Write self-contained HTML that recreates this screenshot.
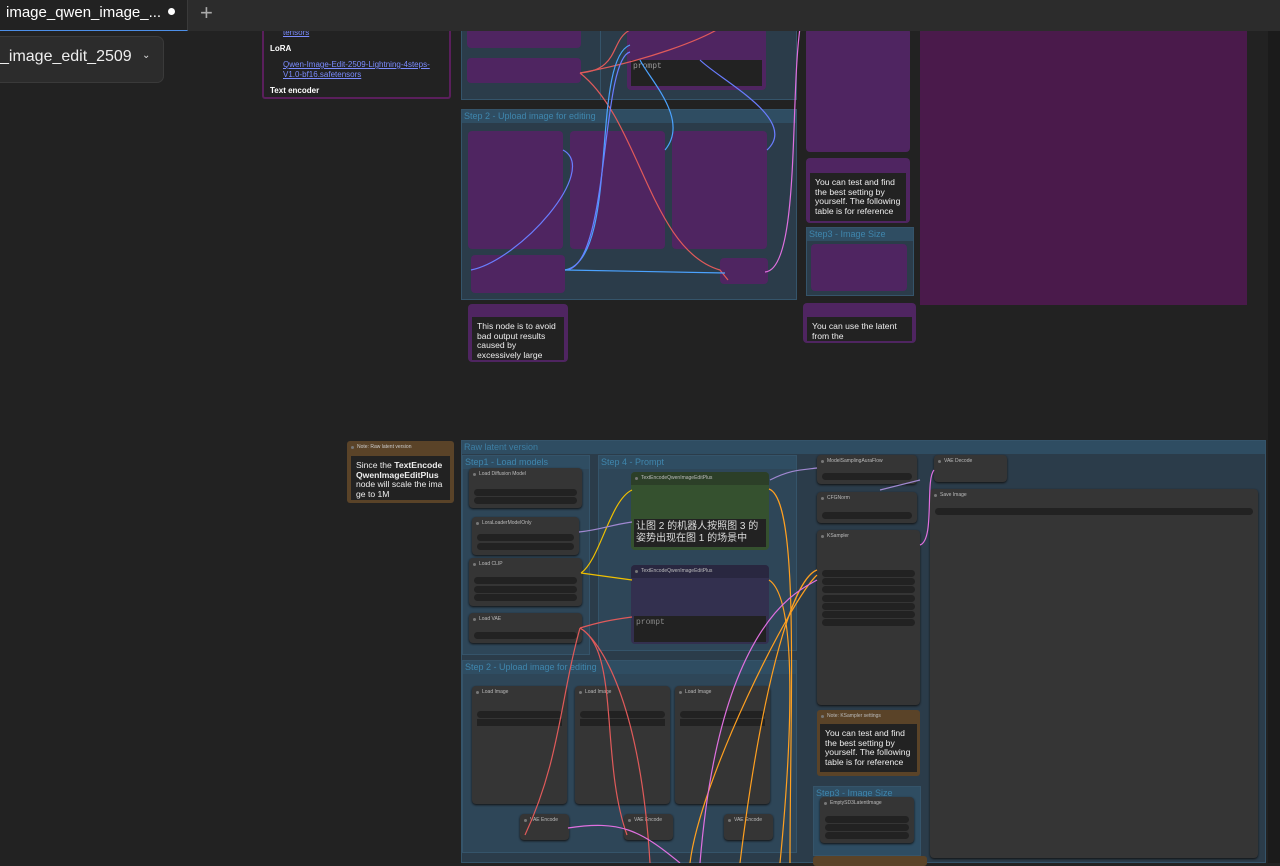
<!DOCTYPE html>
<html><head><meta charset="utf-8"><style>
*{box-sizing:border-box;margin:0;padding:0}
body{width:1280px;height:863px;background:#222;position:relative;overflow:hidden;font-family:"Liberation Sans","Noto Sans CJK SC",sans-serif}
.a{position:absolute}
.grp{position:absolute;background:#2b3c4a;border:1px solid #35546a}
.gh{position:absolute;left:0;right:0;top:0;height:13px;background:#2f4d62;color:#3f86ad;font-size:9px;padding-left:2px;line-height:13px}
.pn{position:absolute;background:#4f2561;border-radius:4px}
.n{position:absolute;background:#353535;border-radius:4px;box-shadow:0 1px 2px #111}
.nt{height:13px;font-size:5px;color:#bbb;line-height:13px;padding-left:10px;position:relative}
.nt:before{content:"";position:absolute;left:4px;top:5px;width:3px;height:3px;border-radius:50%;background:#777}
.w{position:absolute;height:7px;background:#222;border-radius:4px;left:5px;right:5px}
.tb{position:absolute;background:#222;color:#eee;font-size:8.6px;line-height:9.6px;padding:5px 5px;overflow:hidden;word-break:break-word}
</style></head><body>

<div class="a" style="left:262px;top:28px;width:189px;height:71px;background:#222;border:2px solid #5a1f5c;border-top:none;border-radius:0 0 3px 3px"></div>
<div class="a" style="left:270px;top:28px;font-size:8px;color:#fff;line-height:10px">
<div style="color:#7b8cff;text-decoration:underline;margin-left:13px">tensors</div>
<div style="font-weight:bold;margin-top:6px">LoRA</div>
<div style="margin:6px 0 0 13px;color:#7b8cff;text-decoration:underline;width:160px">Qwen-Image-Edit-2509-Lightning-4steps-V1.0-bf16.safetensors</div>
<div style="font-weight:bold;margin-top:6px">Text encoder</div></div>

<div class="grp" style="left:461px;top:28px;width:142px;height:72px;border-top:none"></div>
<div class="pn" style="left:467px;top:28px;width:114px;height:20px"></div>
<div class="pn" style="left:467px;top:58px;width:114px;height:25px"></div>
<div class="grp" style="left:600px;top:28px;width:197px;height:72px;border-top:none"></div>
<div class="pn" style="left:627px;top:28px;width:139px;height:62px"></div>
<div class="a" style="left:631px;top:60px;width:131px;height:26px;background:#222;color:#999;font-family:'Liberation Mono',monospace;font-size:8px;padding:2px">prompt</div>

<div class="grp" style="left:461px;top:109px;width:336px;height:191px"><div class="gh">Step 2 - Upload image for editing</div></div>
<div class="pn" style="left:468px;top:131px;width:95px;height:118px"></div>
<div class="pn" style="left:570px;top:131px;width:95px;height:118px"></div>
<div class="pn" style="left:672px;top:131px;width:95px;height:118px"></div>
<div class="pn" style="left:471px;top:255px;width:94px;height:38px"></div>
<div class="pn" style="left:720px;top:258px;width:48px;height:26px"></div>
<div class="pn" style="left:468px;top:304px;width:100px;height:58px"></div>
<div class="tb" style="left:472px;top:317px;width:92px;height:43px">This node is to avoid bad output results caused by excessively large</div>

<div class="pn" style="left:806px;top:28px;width:104px;height:124px"></div>
<div class="pn" style="left:806px;top:158px;width:104px;height:65px"></div>
<div class="tb" style="left:810px;top:173px;width:96px;height:48px">You can test and find the best setting by yourself. The following table is for reference</div>
<div class="grp" style="left:806px;top:227px;width:108px;height:69px"><div class="gh">Step3 - Image Size</div></div>
<div class="pn" style="left:811px;top:244px;width:96px;height:47px"></div>
<div class="pn" style="left:803px;top:303px;width:113px;height:40px"></div>
<div class="tb" style="left:807px;top:317px;width:105px;height:24px">You can use the latent from the</div>
<div class="a" style="left:920px;top:28px;width:327px;height:277px;background:#4a1a4b"></div>
<div class="a" style="left:1268px;top:28px;width:12px;height:835px;background:#1b1b1b"></div>

<div class="a" style="left:347px;top:441px;width:107px;height:62px;background:#5a4328;border-radius:3px"><div class="nt" style="color:#ccc">Note: Raw latent version</div></div>
<div class="tb" style="left:351px;top:456px;width:99px;height:44px;font-size:8.6px;word-break:break-all">Since the <b>TextEncodeQwenImageEditPlus</b> node will scale the image to 1M</div>

<div class="grp" style="left:461px;top:440px;width:805px;height:423px"><div class="gh" style="color:#3d7ea3">Raw latent version</div></div>
<div class="grp" style="left:462px;top:455px;width:128px;height:200px;background:#2e4658"><div class="gh">Step1 - Load models</div></div>
<div class="grp" style="left:598px;top:455px;width:199px;height:196px;background:#2e4658"><div class="gh">Step 4 - Prompt</div></div>
<div class="grp" style="left:462px;top:660px;width:335px;height:193px;background:#2e4658"><div class="gh">Step 2 - Upload image for editing</div></div>

<div class="n" style="left:469px;top:468px;width:113px;height:40px"><div class="nt">Load Diffusion Model</div><div class="w" style="top:21px"></div><div class="w" style="top:29px"></div></div>
<div class="n" style="left:472px;top:517px;width:107px;height:38px"><div class="nt">LoraLoaderModelOnly</div><div class="w" style="top:17px"></div><div class="w" style="top:26px"></div></div>
<div class="n" style="left:469px;top:558px;width:113px;height:48px"><div class="nt">Load CLIP</div><div class="w" style="top:19px"></div><div class="w" style="top:28px"></div><div class="w" style="top:36px"></div></div>
<div class="n" style="left:469px;top:613px;width:113px;height:30px"><div class="nt">Load VAE</div><div class="w" style="top:19px"></div></div>

<div class="a" style="left:631px;top:472px;width:138px;height:78px;background:#35512f;border-radius:4px"><div class="nt" style="background:#2c3f28;border-radius:4px 4px 0 0">TextEncodeQwenImageEditPlus</div></div>
<div class="a" style="left:634px;top:519px;width:132px;height:28px;background:#222;color:#ddd;font-size:10px;line-height:12px;padding:2px">让图 2 的机器人按照图 3 的姿势出现在图 1 的场景中</div>
<div class="a" style="left:631px;top:565px;width:138px;height:79px;background:#33304f;border-radius:4px"><div class="nt" style="background:#292740;border-radius:4px 4px 0 0">TextEncodeQwenImageEditPlus</div></div>
<div class="a" style="left:634px;top:616px;width:132px;height:26px;background:#222;color:#888;font-family:'Liberation Mono',monospace;font-size:8px;padding:2px">prompt</div>

<div class="n" style="left:472px;top:686px;width:95px;height:118px"><div class="nt">Load Image</div><div class="w" style="top:25px"></div><div class="w" style="top:33px;border-radius:0"></div></div>
<div class="n" style="left:575px;top:686px;width:95px;height:118px"><div class="nt">Load Image</div><div class="w" style="top:25px"></div><div class="w" style="top:33px;border-radius:0"></div></div>
<div class="n" style="left:675px;top:686px;width:95px;height:118px"><div class="nt">Load Image</div><div class="w" style="top:25px"></div><div class="w" style="top:33px;border-radius:0"></div></div>
<div class="n" style="left:520px;top:814px;width:49px;height:26px"><div class="nt">VAE Encode</div></div>
<div class="n" style="left:624px;top:814px;width:49px;height:26px"><div class="nt">VAE Encode</div></div>
<div class="n" style="left:724px;top:814px;width:49px;height:26px"><div class="nt">VAE Encode</div></div>

<div class="n" style="left:817px;top:455px;width:100px;height:29px"><div class="nt">ModelSamplingAuraFlow</div><div class="w" style="top:18px"></div></div>
<div class="n" style="left:817px;top:492px;width:100px;height:31px"><div class="nt">CFGNorm</div><div class="w" style="top:20px"></div></div>
<div class="n" style="left:817px;top:530px;width:103px;height:175px"><div class="nt">KSampler</div>
<div class="w" style="top:40px"></div><div class="w" style="top:48px"></div><div class="w" style="top:56px"></div><div class="w" style="top:65px"></div><div class="w" style="top:73px"></div><div class="w" style="top:81px"></div><div class="w" style="top:89px"></div></div>
<div class="n" style="left:934px;top:455px;width:73px;height:27px"><div class="nt">VAE Decode</div></div>
<div class="n" style="left:930px;top:489px;width:328px;height:369px"><div class="nt">Save Image</div><div class="w" style="top:19px"></div></div>
<div class="a" style="left:817px;top:710px;width:103px;height:66px;background:#5a4328;border-radius:3px"><div class="nt">Note: KSampler settings</div></div>
<div class="tb" style="left:820px;top:724px;width:97px;height:48px">You can test and find the best setting by yourself. The following table is for reference</div>
<div class="grp" style="left:813px;top:786px;width:108px;height:70px;background:#2e4d63"><div class="gh">Step3 - Image Size</div></div>
<div class="n" style="left:820px;top:797px;width:94px;height:46px"><div class="nt">EmptySD3LatentImage</div><div class="w" style="top:19px"></div><div class="w" style="top:27px"></div><div class="w" style="top:35px"></div></div>
<div class="a" style="left:813px;top:856px;width:114px;height:10px;background:#5a4328;border-radius:3px"></div>

<svg class="a" style="left:0;top:0" width="1280" height="863" fill="none" stroke-width="1.2">
<path d="M580 73 C620 70 610 40 630 30" stroke="#e05a5a"/>
<path d="M580 73 C650 60 700 40 720 28" stroke="#e05a5a"/>
<path d="M580 73 C640 120 650 250 720 270 L728 280" stroke="#e05a5a"/>
<path d="M563 150 C600 170 520 260 471 270" stroke="#6a7dff"/>
<path d="M565 270 C620 260 590 60 630 45" stroke="#4ba3ff"/>
<path d="M565 270 C610 270 600 60 630 52" stroke="#6a7dff"/>
<path d="M565 270 L725 273" stroke="#4ba3ff"/>
<path d="M665 150 C690 120 650 80 640 60" stroke="#4ba3ff"/>
<path d="M767 150 C800 120 720 80 700 60" stroke="#6a7dff"/>
<path d="M765 272 C800 270 790 100 800 28" stroke="#e070e0"/>
<path d="M581 573 C600 560 610 500 632 490" stroke="#f0c000"/>
<path d="M581 573 L632 580" stroke="#f0c000"/>
<path d="M579 532 C600 530 610 525 632 522" stroke="#a088d0"/>
<path d="M580 628 C600 622 610 620 632 617" stroke="#e05a5a"/>
<path d="M580 628 C600 640 640 700 650 863" stroke="#e05a5a"/>
<path d="M580 628 C560 700 560 760 525 835" stroke="#e05a5a"/>
<path d="M580 628 C620 650 600 760 627 835" stroke="#e05a5a"/>
<path d="M769 489 C800 500 790 700 790 863" stroke="#ffa020"/>
<path d="M769 580 C800 600 790 760 780 863" stroke="#ffa020"/>
<path d="M817 570 C790 580 760 700 740 863" stroke="#ffa020"/>
<path d="M817 575 C790 600 700 780 690 863" stroke="#ffa020"/>
<path d="M817 580 C800 590 720 620 700 863" stroke="#e070e0"/>
<path d="M920 545 C935 540 925 480 934 470" stroke="#e070e0"/>
<path d="M770 480 C790 470 800 470 817 468" stroke="#a088d0"/>
<path d="M880 490 L920 480" stroke="#a088d0"/>
<path d="M568 828 C620 820 640 830 680 863" stroke="#e070e0"/>
</svg>

<div class="a" style="left:0;top:0;width:1280px;height:31px;background:#2c2c2c"></div>
<div class="a" style="left:0;top:0;width:188px;height:31px;background:#222;border-bottom:1px solid #4d8fe8;border-right:1px solid #3a3a3a"></div>
<div class="a" style="left:6px;top:4px;font-size:15px;color:#fff">image_qwen_image_...</div>
<div class="a" style="left:168px;top:8px;width:7px;height:7px;border-radius:50%;background:#fff"></div>
<div class="a" style="left:200px;top:0;font-size:22px;color:#aaa;line-height:26px">+</div>
<div class="a" style="left:-10px;top:36px;width:174px;height:47px;background:#2c2c2c;border:1px solid #3a3a3a;border-radius:7px"></div>
<div class="a" style="left:0;top:48px;font-size:16px;color:#eee">_image_edit_2509</div>
<div class="a" style="left:142px;top:50px;font-size:10px;color:#ddd">&#8964;</div>
</body></html>
